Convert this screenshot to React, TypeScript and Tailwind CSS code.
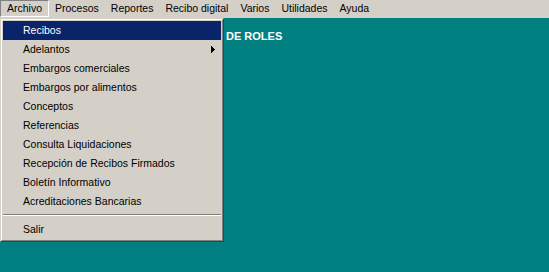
const menus = ["Archivo", "Procesos", "Reportes", "Recibo digital", "Varios", "Utilidades", "Ayuda"];

const items: { label: string; sub?: boolean }[] = [
  { label: "Recibos" },
  { label: "Adelantos", sub: true },
  { label: "Embargos comerciales" },
  { label: "Embargos por alimentos" },
  { label: "Conceptos" },
  { label: "Referencias" },
  { label: "Consulta Liquidaciones" },
  { label: "Recepción de Recibos Firmados" },
  { label: "Boletín Informativo" },
  { label: "Acreditaciones Bancarias" },
];

function MenuItem({ label, sub, active }: { label: string; sub?: boolean; active?: boolean }) {
  return (
    <div
      className={`flex h-[19px] items-center justify-between pl-[20px] pr-[6px] ${
        active ? "bg-[#0a246a] text-white" : "text-black"
      }`}
    >
      <span>{label}</span>
      {sub && (
        <svg width="4" height="7" viewBox="0 0 4 7" className="block">
          <path d="M0 0h1v1h1v1h1v1h1v1h-1v1h-1v1h-1v1h-1z" fill={active ? "#fff" : "#000"} />
        </svg>
      )}
    </div>
  );
}

export default function App() {
  return (
    <div className="relative flex h-screen flex-col overflow-hidden bg-[#008080] font-['Liberation_Sans',Arial,sans-serif] text-[10.5px]">
      {/* barra de menú */}
      <div className="flex h-[18px] bg-[#d4d0c8] text-black">
        {menus.map((m, i) => (
          <div
            key={m}
            className={`flex h-[17px] items-center px-[6px] ${
              i === 0 ? "border border-b-white border-l-[#808080] border-r-white border-t-[#808080] px-[5px]" : ""
            }`}
          >
            {m}
          </div>
        ))}
      </div>

      <div className="pl-[226px] pt-[13px] text-[11px] font-bold leading-none text-white">DE ROLES</div>

      {/* menú desplegable Archivo */}
      <div className="absolute left-0 top-[18px] w-[224px] border border-b-[#404040] border-l-[#d4d0c8] border-r-[#404040] border-t-[#d4d0c8] bg-[#d4d0c8]">
        <div className="border border-b-[#808080] border-l-white border-r-[#808080] border-t-white p-[1px]">
          {items.map((it, i) => (
            <MenuItem key={it.label} label={it.label} sub={it.sub} active={i === 0} />
          ))}
          <div className="pb-[4px] pt-[3px]">
            <div className="border-b border-t border-b-white border-t-[#808080]" />
          </div>
          <MenuItem label="Salir" />
        </div>
      </div>
    </div>
  );
}
